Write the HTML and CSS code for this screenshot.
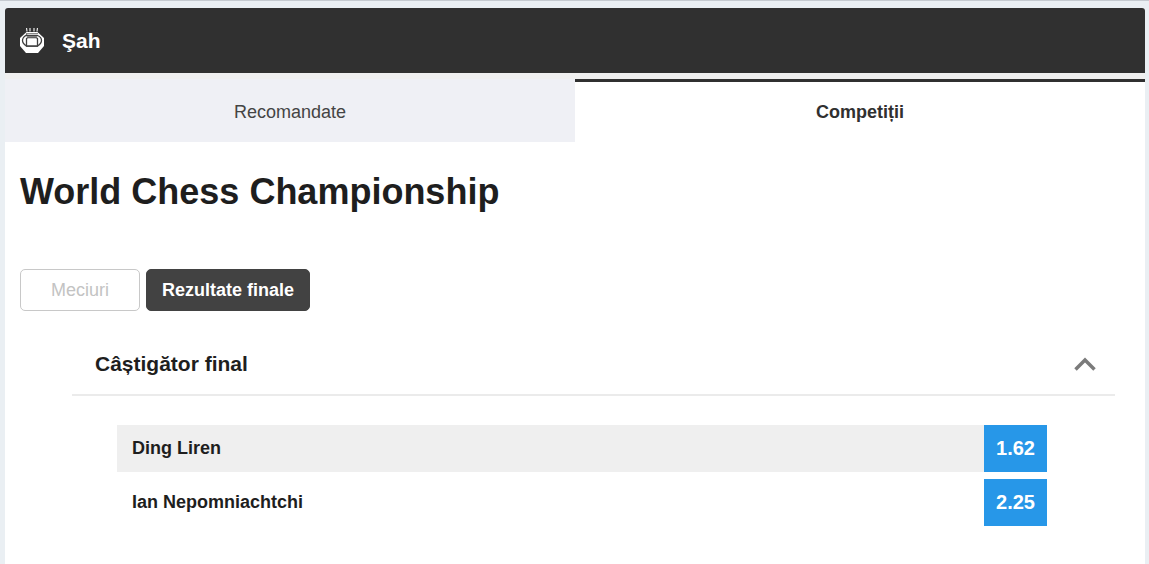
FILE: index.html
```
<!DOCTYPE html>
<html lang="ro">
<head>
    <meta charset="UTF-8">
    <meta name="viewport" content="width=device-width, initial-scale=1.0">
    <title>Şah - World Chess Championship</title>
    <link rel="stylesheet" href="styles.css">
</head>
<body>
    <main class="container">
        <header class="sport-header">
            <svg class="sport-icon" viewBox="0 0 24 25" aria-hidden="true">
                <path d="M6.500 0l.5 3.500M10 0v3.500M14 0v3.500M17.500 0l-.5 3.500" stroke="#e8e8e8" stroke-width="1.200"/>
                <path d="M6.500 4h11L24 10v8l-6 7H6l-6-7v-8z" fill="#fff"/>
                <path d="M6 5.500h12" stroke="#8a8a8a" stroke-width="1"/>
                <path d="M6.500 7.500h11c2.500 1 4 3 4 5s-1.500 4-4 5.500h-11c-2.500-1.500-4-3.500-4-5.500s1.500-4 4-5.500z" fill="#fff" stroke="#404040" stroke-width="1.300"/>
                <path d="M6.500 18V10.500l1.500-1h8l1.500 1V18z" fill="#fff" stroke="#404040" stroke-width="1.300"/>
                <path d="M7 9h10" stroke="#707070" stroke-width="1.500"/>
            </svg>
            <span class="sport-name">Şah</span>
        </header>
        <nav class="tabs">
            <button type="button" class="tab">Recomandate</button>
            <button type="button" class="tab active">Competiții</button>
        </nav>
        <div class="content">
            <h1>World Chess Championship</h1>
            <div class="button-group">
                <button type="button" class="filter">Meciuri</button>
                <button type="button" class="filter selected">Rezultate finale</button>
            </div>
            <section class="market">
                <div class="market-header">
                    <h2>Câștigător final</h2>
                    <button type="button" class="toggle" aria-label="Închide" aria-expanded="true">
                        <svg viewBox="0 0 22 16" aria-hidden="true">
                            <path d="M1.500 13.500L11 4l9.500 9.500" fill="none" stroke="#7b7b7b" stroke-width="3.500"/>
                        </svg>
                    </button>
                </div>
                <ul class="outcomes">
                    <li class="outcome">
                        <span class="player" id="player1">Ding Liren</span>
                        <button type="button" class="odds" aria-describedby="player1">1.62</button>
                    </li>
                    <li class="outcome">
                        <span class="player" id="player2">Ian Nepomniachtchi</span>
                        <button type="button" class="odds" aria-describedby="player2">2.25</button>
                    </li>
                </ul>
            </section>
        </div>
    </main>
</body>
</html>
```
FILE: styles.css
```
* {
    box-sizing: border-box;
}
body {
    display: flex;
    flex-direction: column;
    min-height: 100vh;
    margin: 0;
    padding: 7px 4px 0 5px;
    border-top: 1px solid #c5cad0;
    background-color: #eaeff3;
    color: #1e1e1e;
    font-family: "Liberation Sans", Arial, sans-serif;
    font-size: 18px;
}
button {
    font-family: inherit;
    font-size: inherit;
    cursor: pointer;
}
.container {
    flex: 1;
    background-color: white;
    border-radius: 3px 3px 0 0;
    overflow: hidden;
}
.sport-header {
    display: flex;
    align-items: center;
    gap: 18px;
    height: 65px;
    padding: 0 15px;
    background-color: #303030;
    color: white;
}
.sport-icon {
    width: 24px;
    height: 25px;
}
.sport-name {
    font-size: 21px;
    font-weight: bold;
}
.tabs {
    display: grid;
    grid-template-columns: 1fr 1fr;
    padding-top: 6px;
    background-color: #efefef;
}
.tab {
    height: 63px;
    padding: 0;
    border: none;
    border-top: 3px solid #eff0f5;
    background-color: #eff0f5;
    color: #444;
}
.tab.active {
    border-top-color: #303030;
    background-color: white;
    color: #303030;
    font-weight: bold;
}
.content {
    padding: 28px 30px 38px 15px;
}
h1 {
    margin: 0 0 55px;
    font-size: 36px;
    line-height: 44px;
}
.button-group {
    display: flex;
    gap: 6px;
    margin-bottom: 23px;
}
.filter {
    min-width: 120px;
    height: 42px;
    padding: 0 15px;
    border: 1px solid #c8c8c8;
    border-radius: 5px;
    background-color: white;
    color: #c3c3c3;
}
.filter.selected {
    border-color: #424242;
    background-color: #424242;
    color: white;
    font-weight: bold;
}
.market {
    margin-left: 52px;
}
.market-header {
    display: flex;
    justify-content: space-between;
    align-items: center;
    height: 62px;
    padding: 0 19px 0 23px;
    border-bottom: 2px solid #ebebeb;
}
h2 {
    margin: 0;
    font-size: 21px;
}
.toggle {
    padding: 0;
    border: none;
    background: none;
}
.toggle svg {
    display: block;
    width: 22px;
    height: 16px;
}
.outcomes {
    display: flex;
    flex-direction: column;
    gap: 7px;
    margin: 29px 68px 0 45px;
    padding: 0;
    list-style: none;
}
.outcome {
    display: flex;
    align-items: center;
    justify-content: space-between;
    height: 47px;
    padding-left: 15px;
    font-weight: bold;
}
.outcome:nth-child(odd) {
    background-color: #efefef;
}
.odds {
    width: 63px;
    height: 100%;
    padding: 0;
    border: none;
    background-color: #2797e8;
    color: white;
    font-size: 20px;
    font-weight: bold;
}
```
